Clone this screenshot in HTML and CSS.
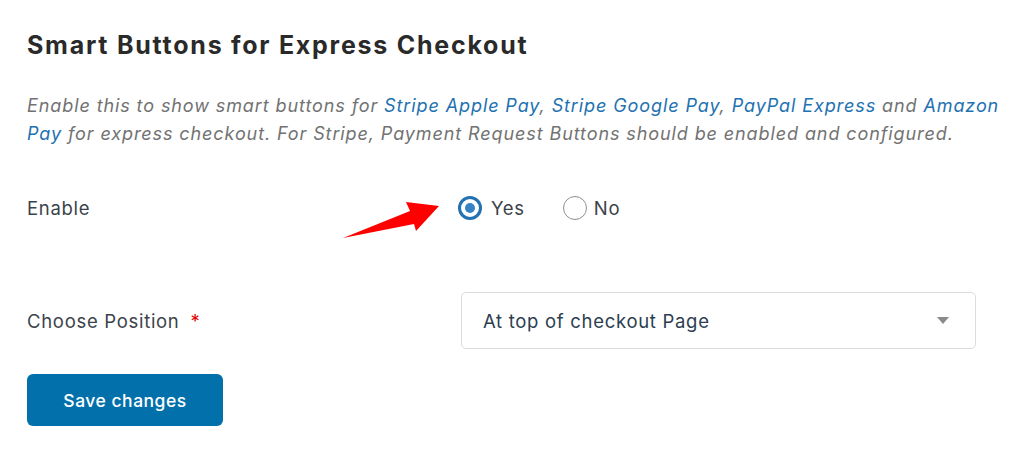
FILE: index.html
```html
<!DOCTYPE html>
<html lang="en">
<head>
    <meta charset="UTF-8">
    <title>Smart Buttons for Express Checkout</title>
    <link rel="stylesheet" href="styles.css">
</head>
<body>
    <div class="wrap">
        <h2 class="title">Smart Buttons for Express Checkout</h2>
        <p class="desc">Enable this to show smart buttons for <a href="#">Stripe Apple Pay</a>, <a href="#">Stripe Google Pay</a>, <a href="#">PayPal Express</a> and <a href="#">Amazon Pay</a> for express checkout. For Stripe, Payment Request Buttons should be enabled and configured.</p>

        <div class="row row-enable">
            <div class="label">Enable</div>
            <div class="field radios">
                <label class="radio">
                    <span class="circle checked"></span>
                    <span>Yes</span>
                </label>
                <label class="radio">
                    <span class="circle"></span>
                    <span>No</span>
                </label>
            </div>
            <!-- red pointer arrow -->
            <svg class="arrow" width="130" height="56" viewBox="0 0 130 56">
                <polygon points="27,50 94,23 90,14 123,18 100,43 98,36" fill="#ff0000"/>
            </svg>
        </div>

        <div class="row row-position">
            <div class="label">Choose Position <span class="req">*</span></div>
            <div class="field">
                <div class="select">
                    <span>At top of checkout Page</span>
                    <span class="caret"></span>
                </div>
            </div>
        </div>

        <button class="save" type="button">Save changes</button>
    </div>
</body>
</html>
```

FILE: styles.css
```css
body{
    margin: 0;
    background-color: #ffffff;
    font-family: Inter, "Noto Sans", "Liberation Sans", sans-serif;
}
.wrap{
    padding: 30px 10px 30px 27px;
}
.title{
    margin: 0;
    font-size: 25px;
    line-height: 30px;
    font-weight: 700;
    letter-spacing: 1.75px;
    color: #2a2a2a;
}
.desc{
    margin: 32px 0 0 0;
    font-size: 18px;
    line-height: 28px;
    font-style: italic;
    letter-spacing: 0.9px;
    color: #727272;
}
.desc a{
    color: #2271b1;
    text-decoration: none;
}
.row{
    display: grid;
    grid-template-columns: 434px 515px;
    align-items: center;
    font-size: 18.5px;
    letter-spacing: 0.7px;
    color: #3c434a;
}
.row-enable{
    position: relative;
    height: 40px;
    margin-top: 40px;
}
.row-position{
    margin-top: 64px;
}
.radios{
    display: flex;
    align-items: center;
    gap: 38px;
    margin-left: -3px;
}
.radio{
    display: flex;
    align-items: center;
    gap: 9px;
}
.radio + .radio{
    gap: 7px;
}
.circle{
    box-sizing: border-box;
    width: 24px;
    height: 24px;
    border: 1px solid #8c8f94;
    border-radius: 50%;
    display: flex;
    align-items: center;
    justify-content: center;
}
.circle.checked{
    border: 3px solid #2271b1;
}
.circle.checked::after{
    content: "";
    width: 10px;
    height: 10px;
    border-radius: 50%;
    background-color: #3582c4;
}
.arrow{
    position: absolute;
    left: 289px;
    top: 0px;
}
.req{
    color: #e00000;
    margin-left: 5px;
}
.select{
    box-sizing: border-box;
    height: 57px;
    border: 1px solid #dcdcde;
    border-radius: 5px;
    padding: 0 26px 0 21px;
    display: flex;
    align-items: center;
    justify-content: space-between;
    color: #2c3e50;
}
.caret{
    width: 0;
    height: 0;
    border-left: 6px solid transparent;
    border-right: 6px solid transparent;
    border-top: 7px solid #8a8a8a;
}
.save{
    margin-top: 25px;
    width: 196px;
    height: 52px;
    border: none;
    border-radius: 6px;
    background-color: #0271ab;
    color: #ffffff;
    font-family: Inter, "Noto Sans", "Liberation Sans", sans-serif;
    font-size: 17.5px;
    font-weight: 500;
    letter-spacing: 0.5px;
    cursor: pointer;
}
```
